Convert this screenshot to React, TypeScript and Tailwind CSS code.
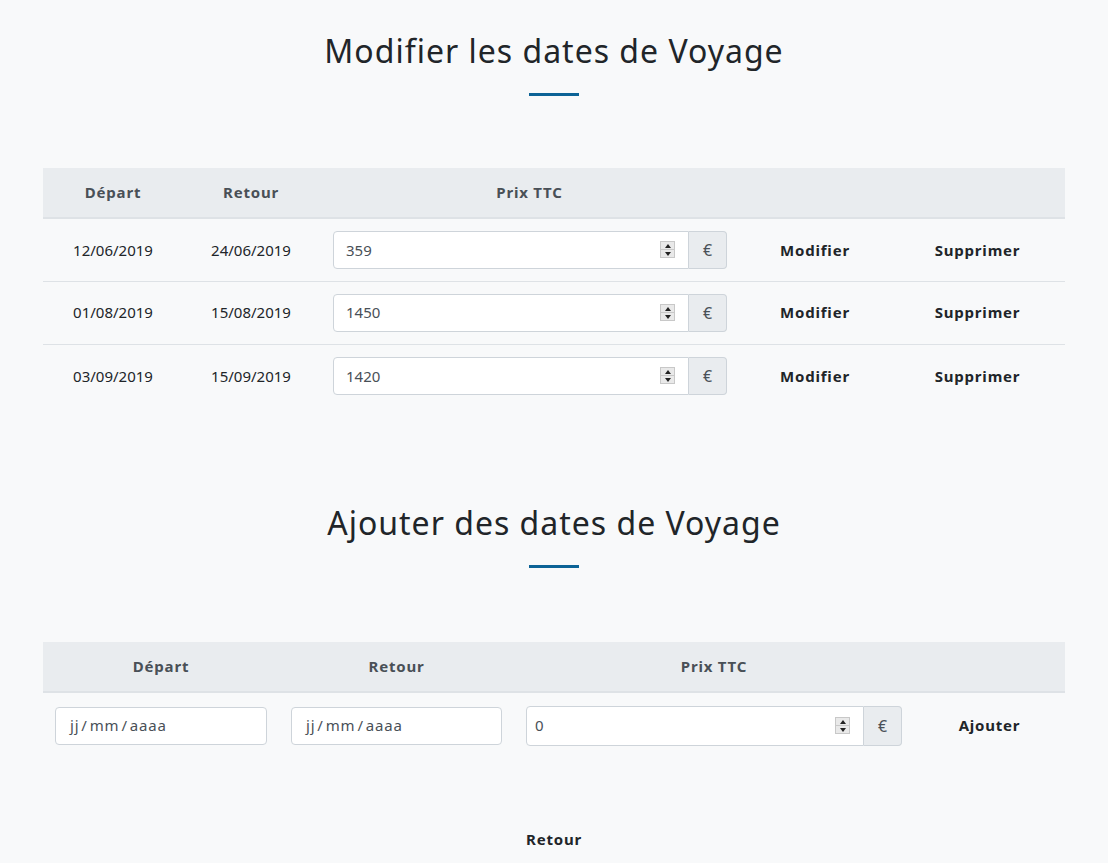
import React from "react";

const font = { fontFamily: '"Noto Sans", "Open Sans", sans-serif' };

function Spinner() {
  return (
    <div className="flex h-[17px] w-[15px] flex-col border border-[#c8c8c8] bg-[#e9e9e9]">
      <div className="flex flex-1 items-center justify-center border-b border-[#c8c8c8]">
        <div className="h-0 w-0 border-x-[3px] border-b-[4px] border-x-transparent border-b-[#222]" />
      </div>
      <div className="flex flex-1 items-center justify-center">
        <div className="h-0 w-0 border-x-[3px] border-t-[4px] border-x-transparent border-t-[#222]" />
      </div>
    </div>
  );
}

function PriceInput({ value, h, pl }: { value: string; h: string; pl: string }) {
  return (
    <div className={`flex ${h} w-full`}>
      <div className={`flex flex-1 items-center justify-between rounded-l-[4px] border border-[#ced4da] bg-white ${pl} pr-[13px] text-[15px] text-[#495057]`}>
        <span>{value}</span>
        <Spinner />
      </div>
      <div className="flex w-[38px] items-center justify-center rounded-r-[4px] border border-l-0 border-[#ced4da] bg-[#e9ecef] text-[16px] text-[#495057]">
        €
      </div>
    </div>
  );
}

function Title({ children }: { children: React.ReactNode }) {
  return (
    <div className="flex flex-col items-center">
      <h1 className="text-[32px] font-normal leading-none tracking-[1px] text-[#212529]">{children}</h1>
      <div className="mt-[26px] h-[3px] w-[50px] bg-[#0c6396]" />
    </div>
  );
}

function DateInput() {
  return (
    <div className="flex h-[38px] items-center rounded-[4px] border border-[#ced4da] bg-white pl-[14px] text-[15px] tracking-[0.8px] text-[#495057]">
      jj<span className="px-[2px]">/</span>mm<span className="px-[2px]">/</span>aaaa
    </div>
  );
}

const rows = [
  ["12/06/2019", "24/06/2019", "359"],
  ["01/08/2019", "15/08/2019", "1450"],
  ["03/09/2019", "15/09/2019", "1420"],
];

export default function App() {
  return (
    <div className="min-h-[863px] bg-[#f8f9fa] px-[43px] pt-[35px]" style={font}>
      <Title>Modifier les dates de Voyage</Title>

      <table className="mt-[72px] w-full border-collapse text-[15px] text-[#212529]">
        <thead>
          <tr className="h-[50px] border-b-2 border-[#dee2e6] bg-[#e9ecef] font-bold tracking-[0.8px] text-[#495057]">
            <th className="w-[140px] font-bold">Départ</th>
            <th className="w-[136px] font-bold">Retour</th>
            <th className="w-[421px] font-bold">Prix TTC</th>
            <th className="w-[150px]"></th>
            <th></th>
          </tr>
        </thead>
        <tbody>
          {rows.map((r, i) => (
            <tr key={i} className="h-[63px] border-b border-[#dee2e6] last:border-b-0">
              <td className="text-center">{r[0]}</td>
              <td className="text-center">{r[1]}</td>
              <td className="pl-[14px] pr-[13px]">
                <PriceInput value={r[2]} h="h-[38px]" pl="pl-3" />
              </td>
              <td className="text-center font-bold tracking-[0.8px]">Modifier</td>
              <td className="text-center font-bold tracking-[0.8px]">Supprimer</td>
            </tr>
          ))}
        </tbody>
      </table>

      <div className="mt-[100px]">
        <Title>Ajouter des dates de Voyage</Title>
      </div>

      <table className="mt-[74px] w-full border-collapse text-[15px] text-[#212529]">
        <thead>
          <tr className="h-[50px] border-b-2 border-[#dee2e6] bg-[#e9ecef] font-bold tracking-[0.8px] text-[#495057]">
            <th className="w-[236px] font-bold">Départ</th>
            <th className="w-[235px] font-bold">Retour</th>
            <th className="w-[400px] font-bold">Prix TTC</th>
            <th></th>
          </tr>
        </thead>
        <tbody>
          <tr className="h-[66px]">
            <td className="px-3">
              <DateInput />
            </td>
            <td className="px-3">
              <DateInput />
            </td>
            <td className="px-3">
              <PriceInput value="0" h="h-[40px]" pl="pl-[8px]" />
            </td>
            <td className="text-center font-bold tracking-[0.8px]">Ajouter</td>
          </tr>
        </tbody>
      </table>

      <div className="mt-[70px] pb-[14px] text-center text-[15px] font-bold tracking-[0.8px] text-[#212529]">Retour</div>
    </div>
  );
}
